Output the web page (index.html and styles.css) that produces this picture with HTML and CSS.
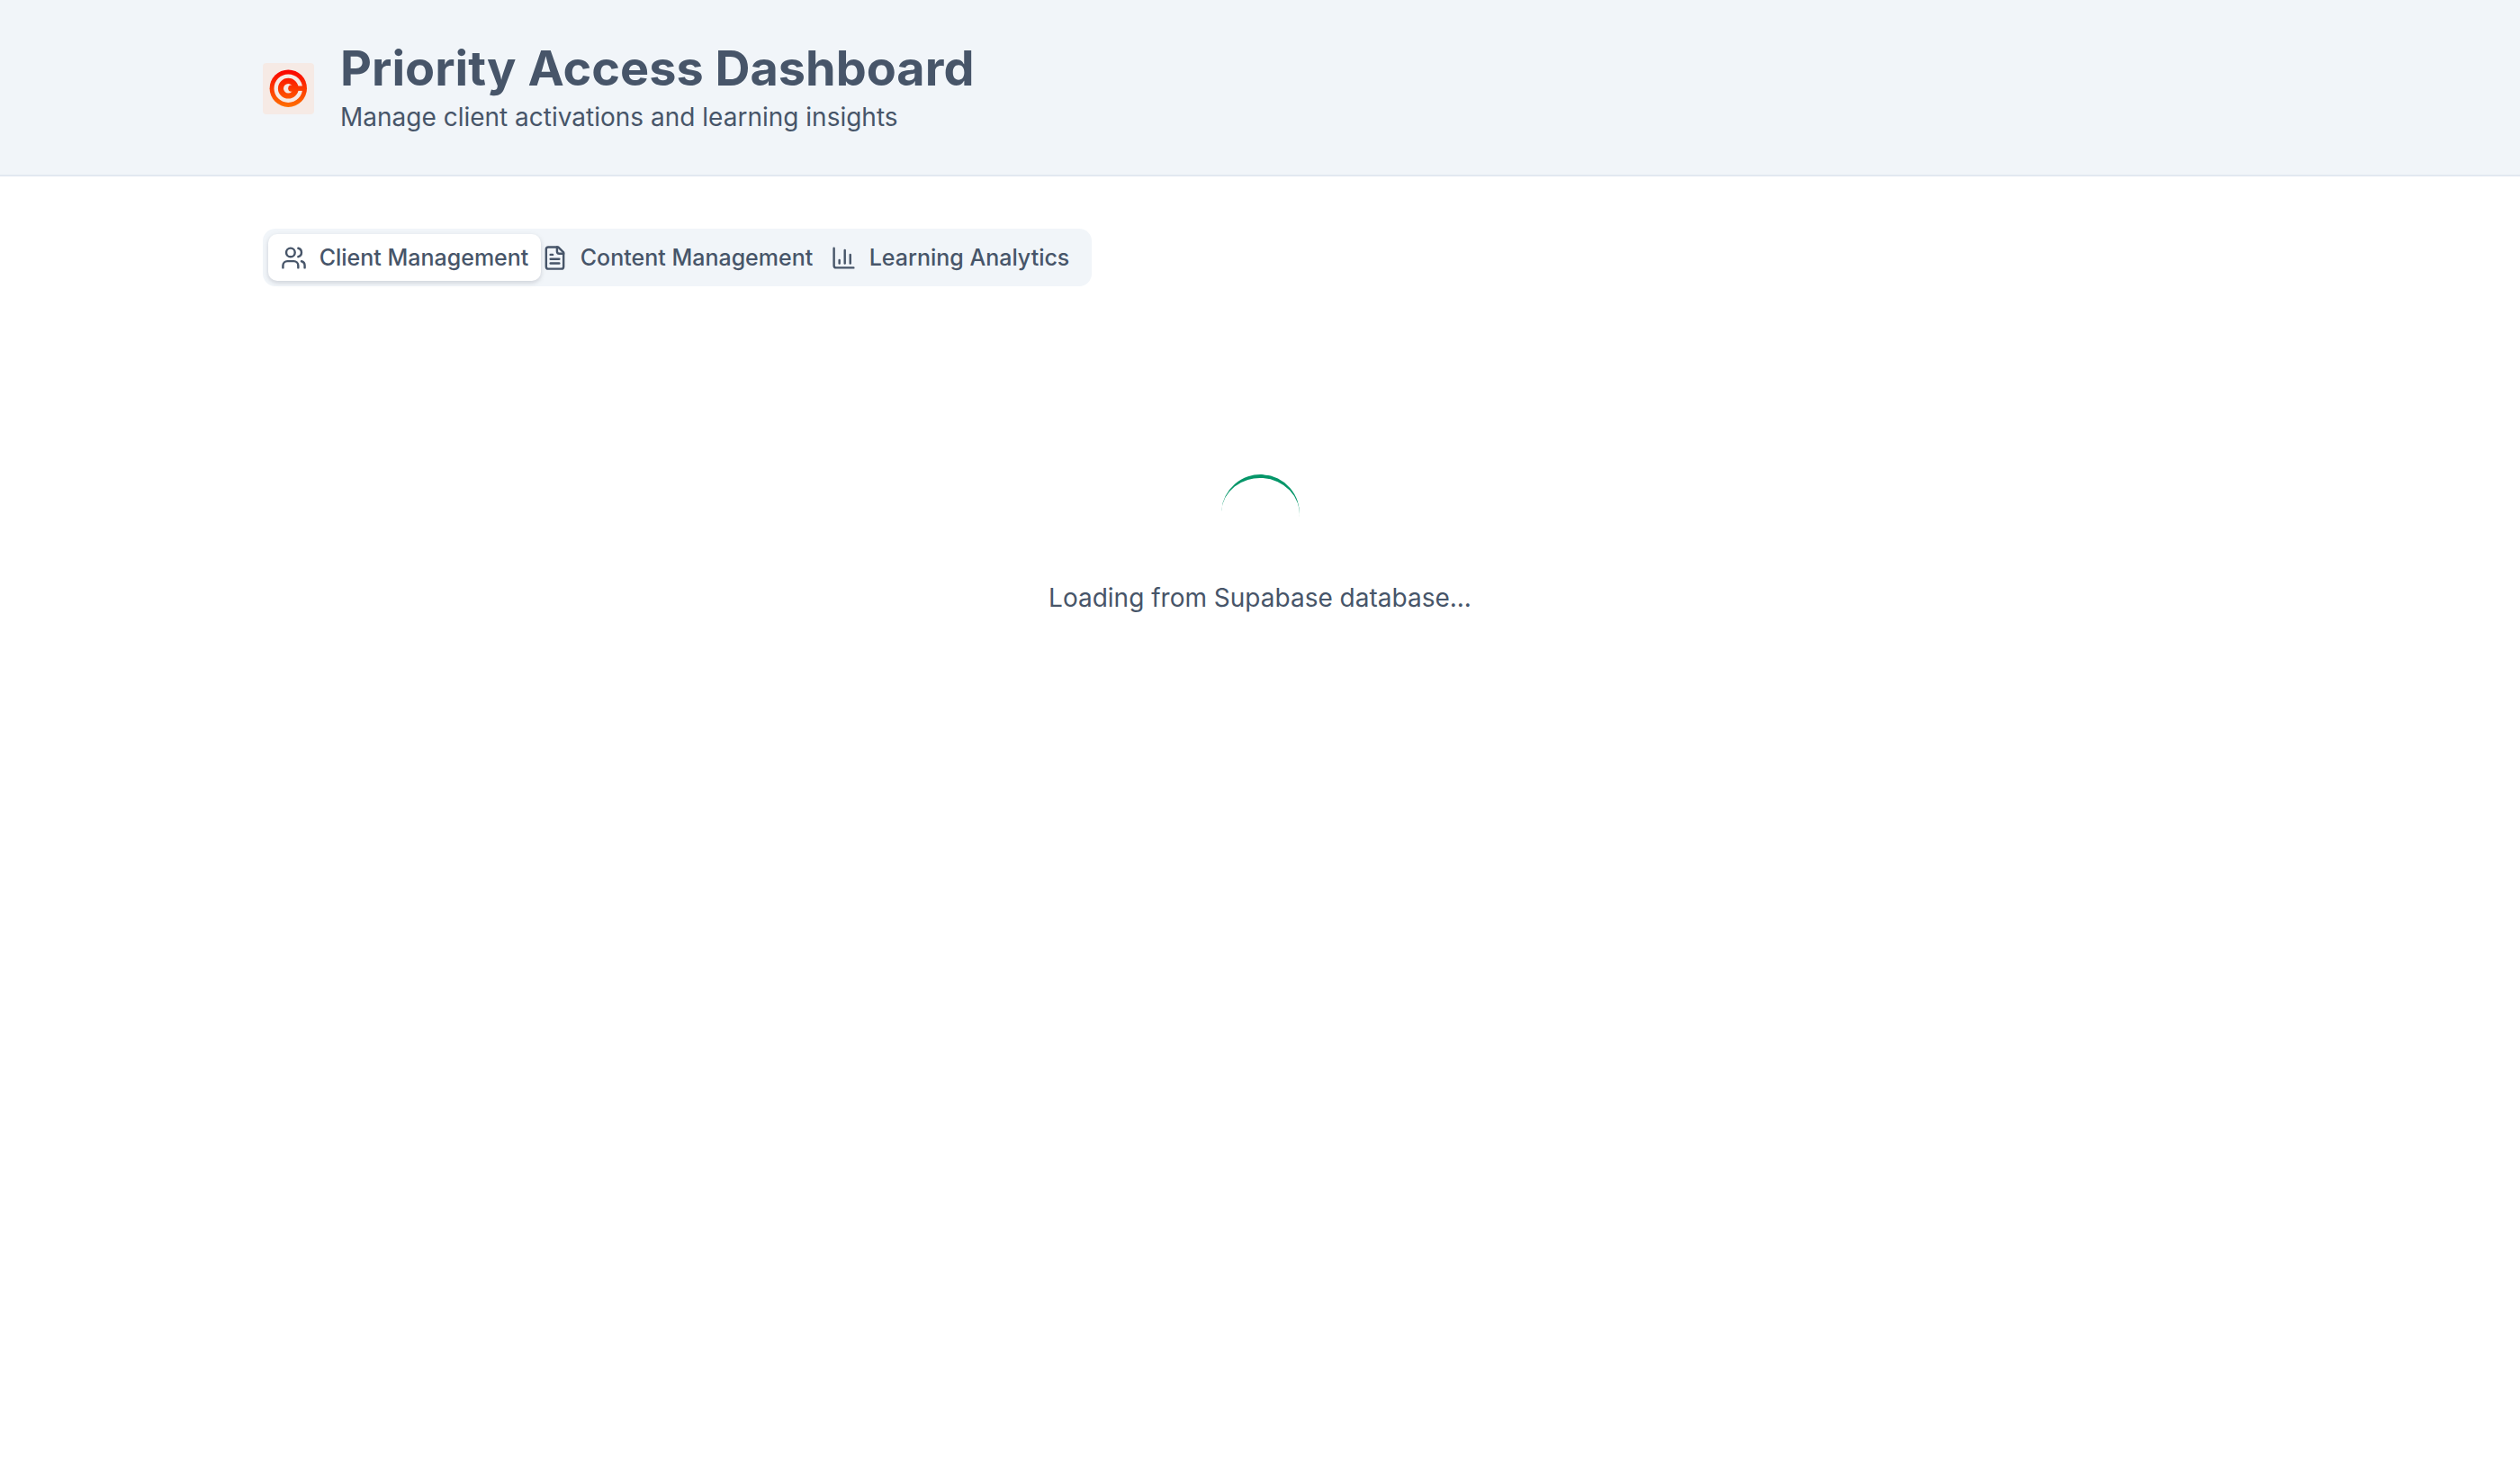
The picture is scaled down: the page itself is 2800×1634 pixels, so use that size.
FILE: index.html
```html
<!DOCTYPE html>
<html lang="en">
<head>
<meta charset="utf-8">
<meta name="viewport" content="width=device-width, initial-scale=1">
<title>Priority Access Dashboard</title>
<link rel="stylesheet" href="styles.css">
</head>
<body>
<header class="site-header">
  <div class="container brand">
    <svg class="logo" viewBox="0 0 57 57" aria-hidden="true">
      <defs>
        <linearGradient id="flame" gradientUnits="userSpaceOnUse" x1="28" y1="7" x2="28" y2="49">
          <stop offset="0" stop-color="#fa0000"/>
          <stop offset="1" stop-color="#ff7000"/>
        </linearGradient>
      </defs>
      <rect width="57" height="57" rx="4" fill="#f6eae5"/>
      <circle cx="28.3" cy="28.2" r="20.7" fill="url(#flame)"/>
      <circle cx="28.3" cy="28.2" r="13.6" fill="none" stroke="#f6eae5" stroke-width="4.4"/>
      <circle cx="28.3" cy="28.2" r="5.3" fill="#f6eae5"/>
      <circle cx="31.8" cy="28.2" r="3.6" fill="url(#flame)"/>
      <rect x="31.8" y="25.5" width="13" height="5.4" fill="url(#flame)"/>
    </svg>
    <div class="brand-text">
      <h1 class="title">Priority Access Dashboard</h1>
      <p class="subtitle">Manage client activations and learning insights</p>
    </div>
  </div>
</header>
<main class="container content">
  <div class="tabs" role="tablist">
    <button class="tab tab-active" type="button" role="tab" aria-selected="true">
      <svg class="icon" viewBox="0 0 24 24" aria-hidden="true"><path d="M16 21v-2a4 4 0 0 0-4-4H6a4 4 0 0 0-4 4v2"/><circle cx="9" cy="7" r="4"/><path d="M22 21v-2a4 4 0 0 0-3-3.87"/><path d="M16 3.13a4 4 0 0 1 0 7.75"/></svg>
      <span>Client Management</span>
    </button>
    <button class="tab" type="button" role="tab" aria-selected="false">
      <svg class="icon" viewBox="0 0 24 24" aria-hidden="true"><path d="M15 2H6a2 2 0 0 0-2 2v16a2 2 0 0 0 2 2h12a2 2 0 0 0 2-2V7Z"/><path d="M14 2v4a2 2 0 0 0 2 2h4"/><path d="M10 9H8"/><path d="M16 13H8"/><path d="M16 17H8"/></svg>
      <span>Content Management</span>
    </button>
    <button class="tab" type="button" role="tab" aria-selected="false">
      <svg class="icon" viewBox="0 0 24 24" aria-hidden="true"><path d="M3 3v16a2 2 0 0 0 2 2h16"/><path d="M18 17V9"/><path d="M13 17V5"/><path d="M8 17v-3"/></svg>
      <span>Learning Analytics</span>
    </button>
  </div>
  <section class="loading" role="status">
    <div class="spinner"></div>
    <p class="loading-text">Loading from Supabase database...</p>
  </section>
</main>
</body>
</html>
```
FILE: styles.css
```css
* {
  box-sizing: border-box;
  margin: 0;
}

body {
  background: #fff;
  color: #475569;
  font-family: Inter, "Liberation Sans", sans-serif;
  font-size: 28px;
  line-height: 40px;
}

.container {
  width: 100%;
  max-width: 2304px;
  margin: 0 auto;
  padding: 0 44px;
}

.site-header {
  padding: 44px 0 42px;
  background: #f1f5f9;
  border-bottom: 2px solid #e2e8f0;
}

.brand {
  display: flex;
  align-items: center;
  gap: 29px;
}

.logo {
  flex: none;
  width: 57px;
  height: 57px;
}

.title {
  font-size: 54px;
  font-weight: 700;
  line-height: 64px;
}

.subtitle {
  line-height: 44px;
}

.content {
  padding-top: 58px;
}

.tabs {
  display: grid;
  grid-template-columns: repeat(3, 303px);
  width: fit-content;
  padding: 6px;
  border-radius: 14px;
  background: #f1f5f9;
}

.tab {
  display: flex;
  align-items: center;
  justify-content: center;
  gap: 14px;
  height: 52px;
  padding: 0;
  border: 0;
  border-radius: 10px;
  background: transparent;
  color: inherit;
  font: 500 25px/36px Inter, "Liberation Sans", sans-serif;
  white-space: nowrap;
}

.tab-active {
  background: #fff;
  box-shadow: 0 2px 6px rgba(15, 23, 42, 0.1), 0 2px 4px rgba(15, 23, 42, 0.06);
}

.icon {
  flex: none;
  width: 29px;
  height: 29px;
  fill: none;
  stroke: currentColor;
  stroke-width: 2;
  stroke-linecap: round;
  stroke-linejoin: round;
}

.loading {
  display: flex;
  flex-direction: column;
  align-items: center;
  gap: 30px;
  padding-top: 209px;
}

.spinner {
  width: 87px;
  height: 87px;
  border-top: 4px solid #059669;
  border-radius: 50%;
  transform: rotate(4deg);
}
```
